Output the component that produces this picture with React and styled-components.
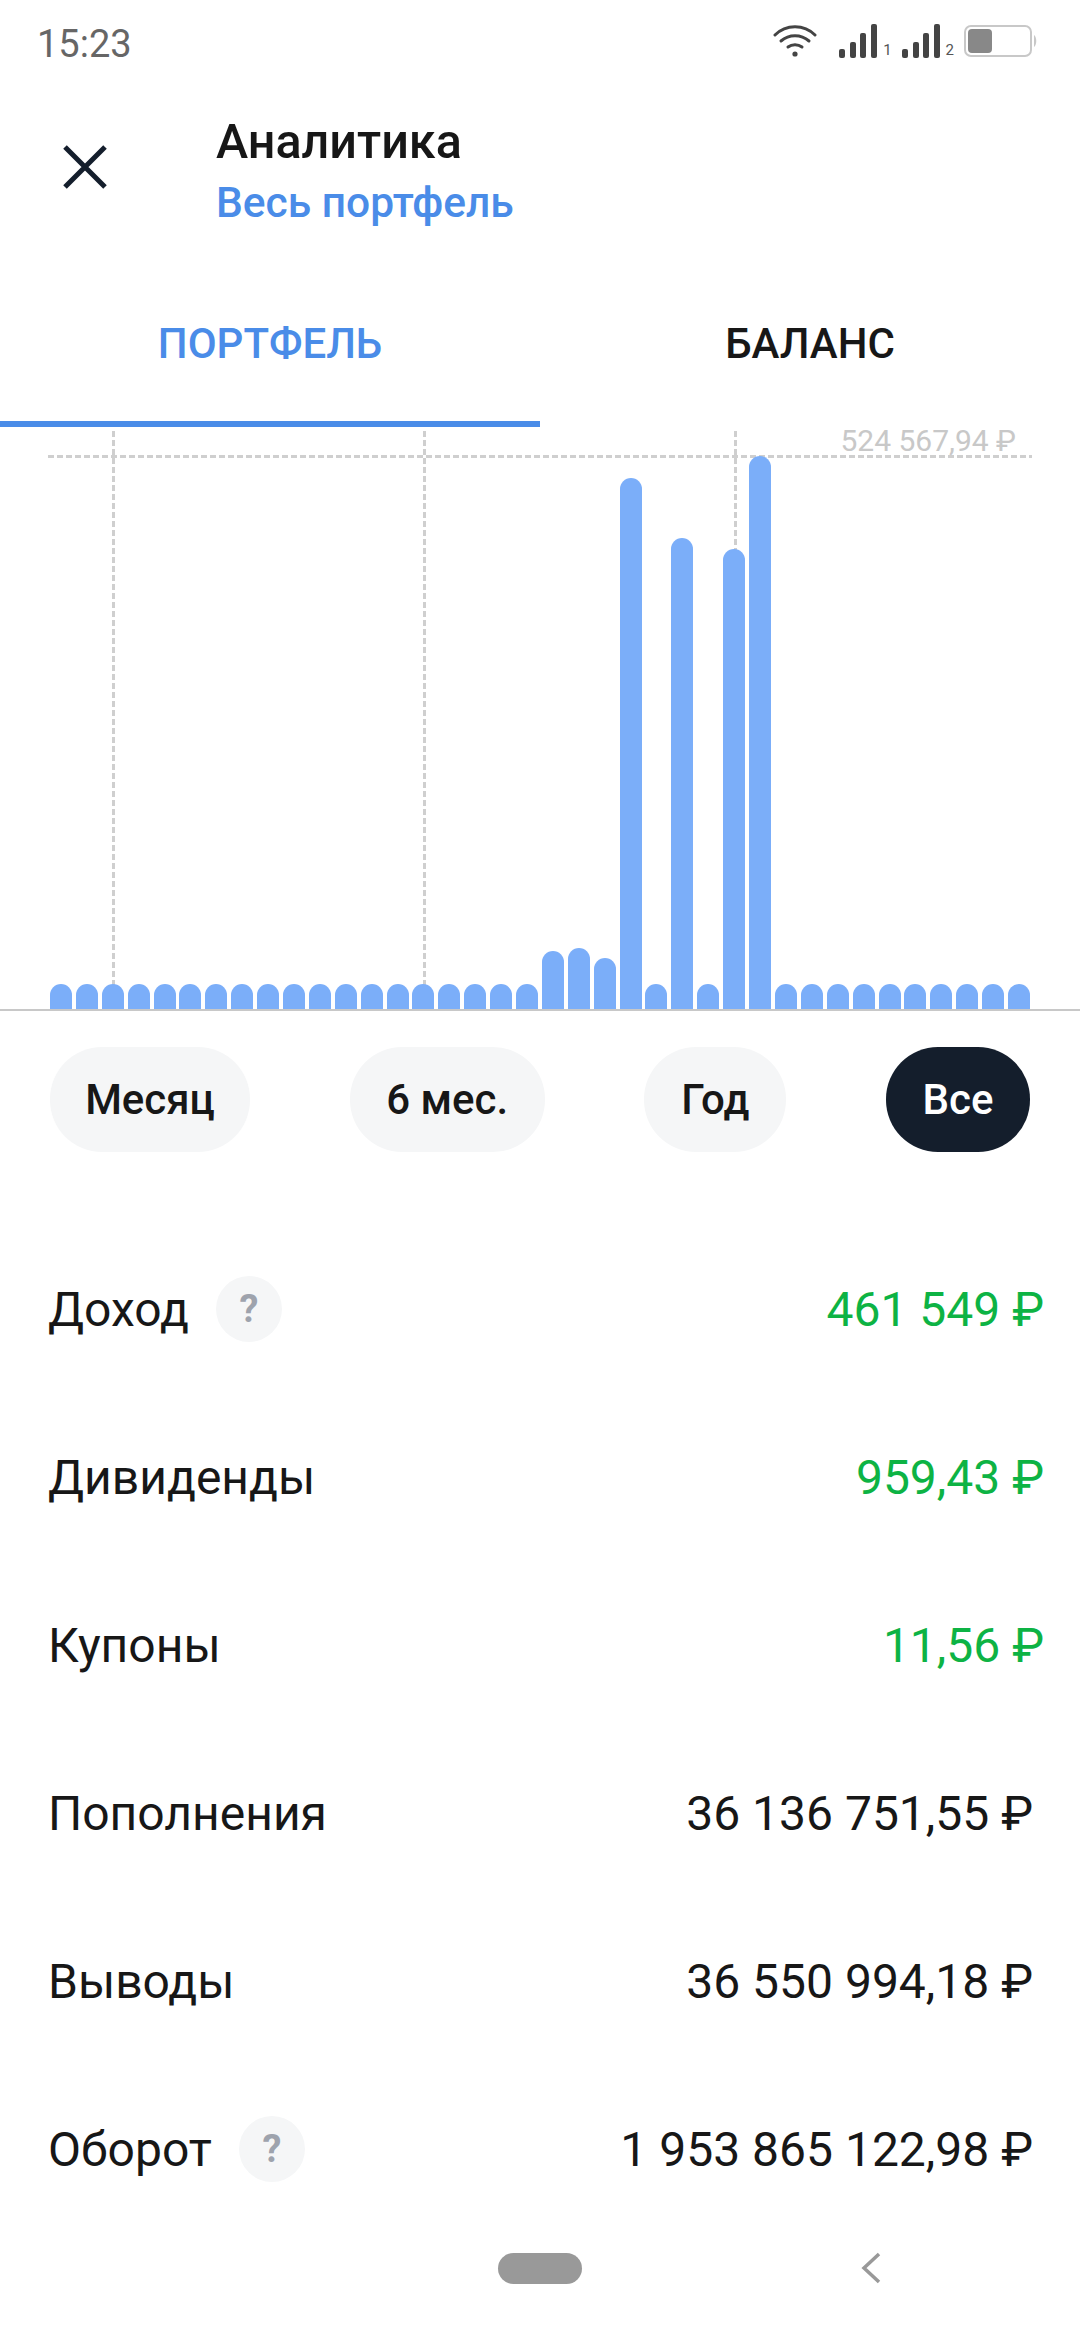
import React from "react";
import styled, { createGlobalStyle } from "styled-components";

const SMALL = 25;
const TALL = { 19: 58, 20: 61, 21: 51, 22: 531, 24: 471, 26: 460, 27: 553 };
const BARS = Array.from({ length: 38 }, (_, i) => TALL[i] || SMALL);

const ROWS = [
  { label: "Доход", value: "461 549 ₽", green: true, hint: true },
  { label: "Дивиденды", value: "959,43 ₽", green: true },
  { label: "Купоны", value: "11,56 ₽", green: true },
  { label: "Пополнения", value: "36 136 751,55 ₽" },
  { label: "Выводы", value: "36 550 994,18 ₽" },
  { label: "Оборот", value: "1 953 865 122,98 ₽", hint: true },
];

const PERIODS = [
  { label: "Месяц", width: 200 },
  { label: "6 мес.", width: 195 },
  { label: "Год", width: 142 },
  { label: "Все", width: 144, active: true },
];

const App = () => {
  return (
    <Screen>
      <GlobalStyle />
      <StatusBar>
        <Time>15:23</Time>
        <StatusIcons>
          <Wifi width="44" height="32" viewBox="0 0 44 32" fill="none" stroke="#444" strokeWidth="3" strokeLinecap="round">
            <path d="M2 10C13 -1 31 -1 42 10" />
            <path d="M8 16C16 9 28 9 36 16" />
            <path d="M15 22C19 19 25 19 29 22" />
            <circle cx="22" cy="29" r="2.6" fill="#444" stroke="none" />
          </Wifi>
          <Signal num="1" />
          <Signal num="2" />
          <svg width="74" height="32" viewBox="0 0 74 32" fill="none">
            <rect x="1" y="1" width="66" height="30" rx="6" stroke="#c8c8c8" strokeWidth="2" />
            <rect x="4" y="4" width="24" height="24" rx="4" fill="#888" />
            <path d="M70 10C73 12 73 20 70 22Z" fill="#c8c8c8" />
          </svg>
        </StatusIcons>
      </StatusBar>

      <Header>
        <CloseButton>
          <svg width="44" height="44" viewBox="0 0 44 44" fill="none" stroke="#141e2c" strokeWidth="5">
            <path d="M2 2L42 42M42 2L2 42" />
          </svg>
        </CloseButton>
        <div>
          <Title>Аналитика</Title>
          <Subtitle>Весь портфель</Subtitle>
        </div>
      </Header>

      <Tabs>
        <Tab $active>ПОРТФЕЛЬ</Tab>
        <Tab>БАЛАНС</Tab>
      </Tabs>

      <Chart>
        <GuideV $x={112} />
        <GuideV $x={423} />
        <GuideV $x={734} />
        <GuideH />
        <MaxLabel>524 567,94 ₽</MaxLabel>
        <Bars>
          {BARS.map((h, i) => (
            <Bar key={i} style={{ height: h }} />
          ))}
        </Bars>
      </Chart>

      <Periods>
        {PERIODS.map((p) => (
          <Period key={p.label} $w={p.width} $active={p.active}>
            {p.label}
          </Period>
        ))}
      </Periods>

      <List>
        {ROWS.map((r) => (
          <Row key={r.label}>
            <Label>
              {r.label}
              {r.hint && <Hint>?</Hint>}
            </Label>
            <Value $green={r.green}>{r.value}</Value>
          </Row>
        ))}
      </List>

      <NavBar>
        <HomePill />
        <svg width="22" height="32" viewBox="0 0 22 32" fill="none" stroke="#999" strokeWidth="3.5">
          <path d="M19 2L4 16L19 30" />
        </svg>
      </NavBar>
    </Screen>
  );
};

const Signal = ({ num }) => (
  <SignalWrap>
    <svg width="38" height="34" viewBox="0 0 38 34" fill="#444">
      <rect x="0" y="25" width="6" height="9" rx="2" />
      <rect x="11" y="18" width="6" height="16" rx="2" />
      <rect x="21" y="9" width="6" height="25" rx="2" />
      <rect x="32" y="0" width="6" height="34" rx="2" />
    </svg>
    <SimNum>{num}</SimNum>
  </SignalWrap>
);

export default App;

const GlobalStyle = createGlobalStyle`
  html, body {
    margin: 0;
    padding: 0;
    background: #fff;
  }
  * {
    box-sizing: border-box;
  }
`;

const Screen = styled.div`
  position: relative;
  width: 1080px;
  height: 2340px;
  background: #fff;
  overflow: hidden;
  font-family: Roboto, "Noto Sans", sans-serif;
  color: #171717;
`;

const StatusBar = styled.div`
  height: 84px;
  padding: 23px 42px 0 37px;
  display: flex;
  justify-content: space-between;
  align-items: flex-start;
`;

const Time = styled.div`
  font-size: 38px;
  line-height: 42px;
  color: #666;
`;

const StatusIcons = styled.div`
  display: flex;
  align-items: center;
  gap: 10px;
  height: 36px;
`;

const Wifi = styled.svg`
  margin-right: 12px;
`;

const SignalWrap = styled.div`
  display: flex;
  align-items: flex-end;
  gap: 6px;
`;

const SimNum = styled.span`
  font-size: 15px;
  line-height: 15px;
  color: #555;
`;

const Header = styled.div`
  display: flex;
  align-items: flex-start;
  height: 166px;
  padding: 30px 0 0 63px;
`;

const CloseButton = styled.div`
  width: 153px;
  margin-top: 31px;
  display: flex;
`;

const Title = styled.div`
  font-size: 48.5px;
  font-weight: 500;
  line-height: 56px;
  color: #171717;
`;

const Subtitle = styled.div`
  margin-top: 8px;
  font-size: 42.5px;
  font-weight: 500;
  line-height: 50px;
  color: #4a8ce8;
`;

const Tabs = styled.div`
  display: flex;
  height: 177px;
`;

const Tab = styled.div`
  width: 540px;
  padding-top: 16px;
  display: flex;
  align-items: center;
  justify-content: center;
  font-size: 42px;
  font-weight: 500;
  color: ${(p) => (p.$active ? "#4a8ce8" : "#171717")};
  border-bottom: 6px solid ${(p) => (p.$active ? "#4a8ce8" : "transparent")};
`;

const Chart = styled.div`
  position: relative;
  height: 584px;
  border-bottom: 2px solid #c8c8c8;
  display: flex;
  align-items: flex-end;
  padding: 0 50px;
`;

const GuideV = styled.div`
  position: absolute;
  left: ${(p) => p.$x}px;
  top: 4px;
  bottom: 0;
  width: 3px;
  background: repeating-linear-gradient(to bottom, #cfcfcf 0 6px, transparent 6px 9px);
`;

const GuideH = styled.div`
  position: absolute;
  left: 48px;
  right: 48px;
  top: 28px;
  height: 3px;
  background: repeating-linear-gradient(to right, #cfcfcf 0 6px, transparent 6px 9px);
`;

const MaxLabel = styled.div`
  position: absolute;
  right: 64px;
  top: 0;
  font-size: 30px;
  line-height: 28px;
  color: #c8c8c8;
`;

const Bars = styled.div`
  position: relative;
  display: flex;
  align-items: flex-end;
  justify-content: space-between;
  width: 980px;
`;

const Bar = styled.div`
  width: 22px;
  background: #7baef9;
  border-radius: 11px 11px 0 0;
`;

const Periods = styled.div`
  display: flex;
  justify-content: space-between;
  padding: 36px 50px 0;
`;

const Period = styled.div`
  width: ${(p) => p.$w}px;
  height: 105px;
  border-radius: 52px;
  display: flex;
  align-items: center;
  justify-content: center;
  font-size: 42px;
  font-weight: 500;
  background: ${(p) => (p.$active ? "#141e2c" : "#f5f6f7")};
  color: ${(p) => (p.$active ? "#fff" : "#171717")};
`;

const List = styled.div`
  padding-top: 73px;
`;

const Row = styled.div`
  height: 168px;
  padding: 0 36px 0 48px;
  display: flex;
  align-items: center;
  justify-content: space-between;
`;

const Label = styled.div`
  display: flex;
  align-items: center;
  gap: 27px;
  font-size: 48px;
`;

const Hint = styled.span`
  width: 66px;
  height: 66px;
  border-radius: 50%;
  background: #f5f6f7;
  display: flex;
  align-items: center;
  justify-content: center;
  font-size: 38px;
  font-weight: 700;
  color: #9ea3ad;
`;

const Value = styled.div`
  font-size: 48px;
  color: ${(p) => (p.$green ? "#0db344" : "#171717")};
  margin-right: ${(p) => (p.$green ? 0 : 11)}px;
`;

const NavBar = styled.div`
  position: absolute;
  left: 498px;
  top: 2252px;
  display: flex;
  align-items: center;
  gap: 278px;
`;

const HomePill = styled.div`
  width: 84px;
  height: 31px;
  border-radius: 16px;
  background: #999;
`;
